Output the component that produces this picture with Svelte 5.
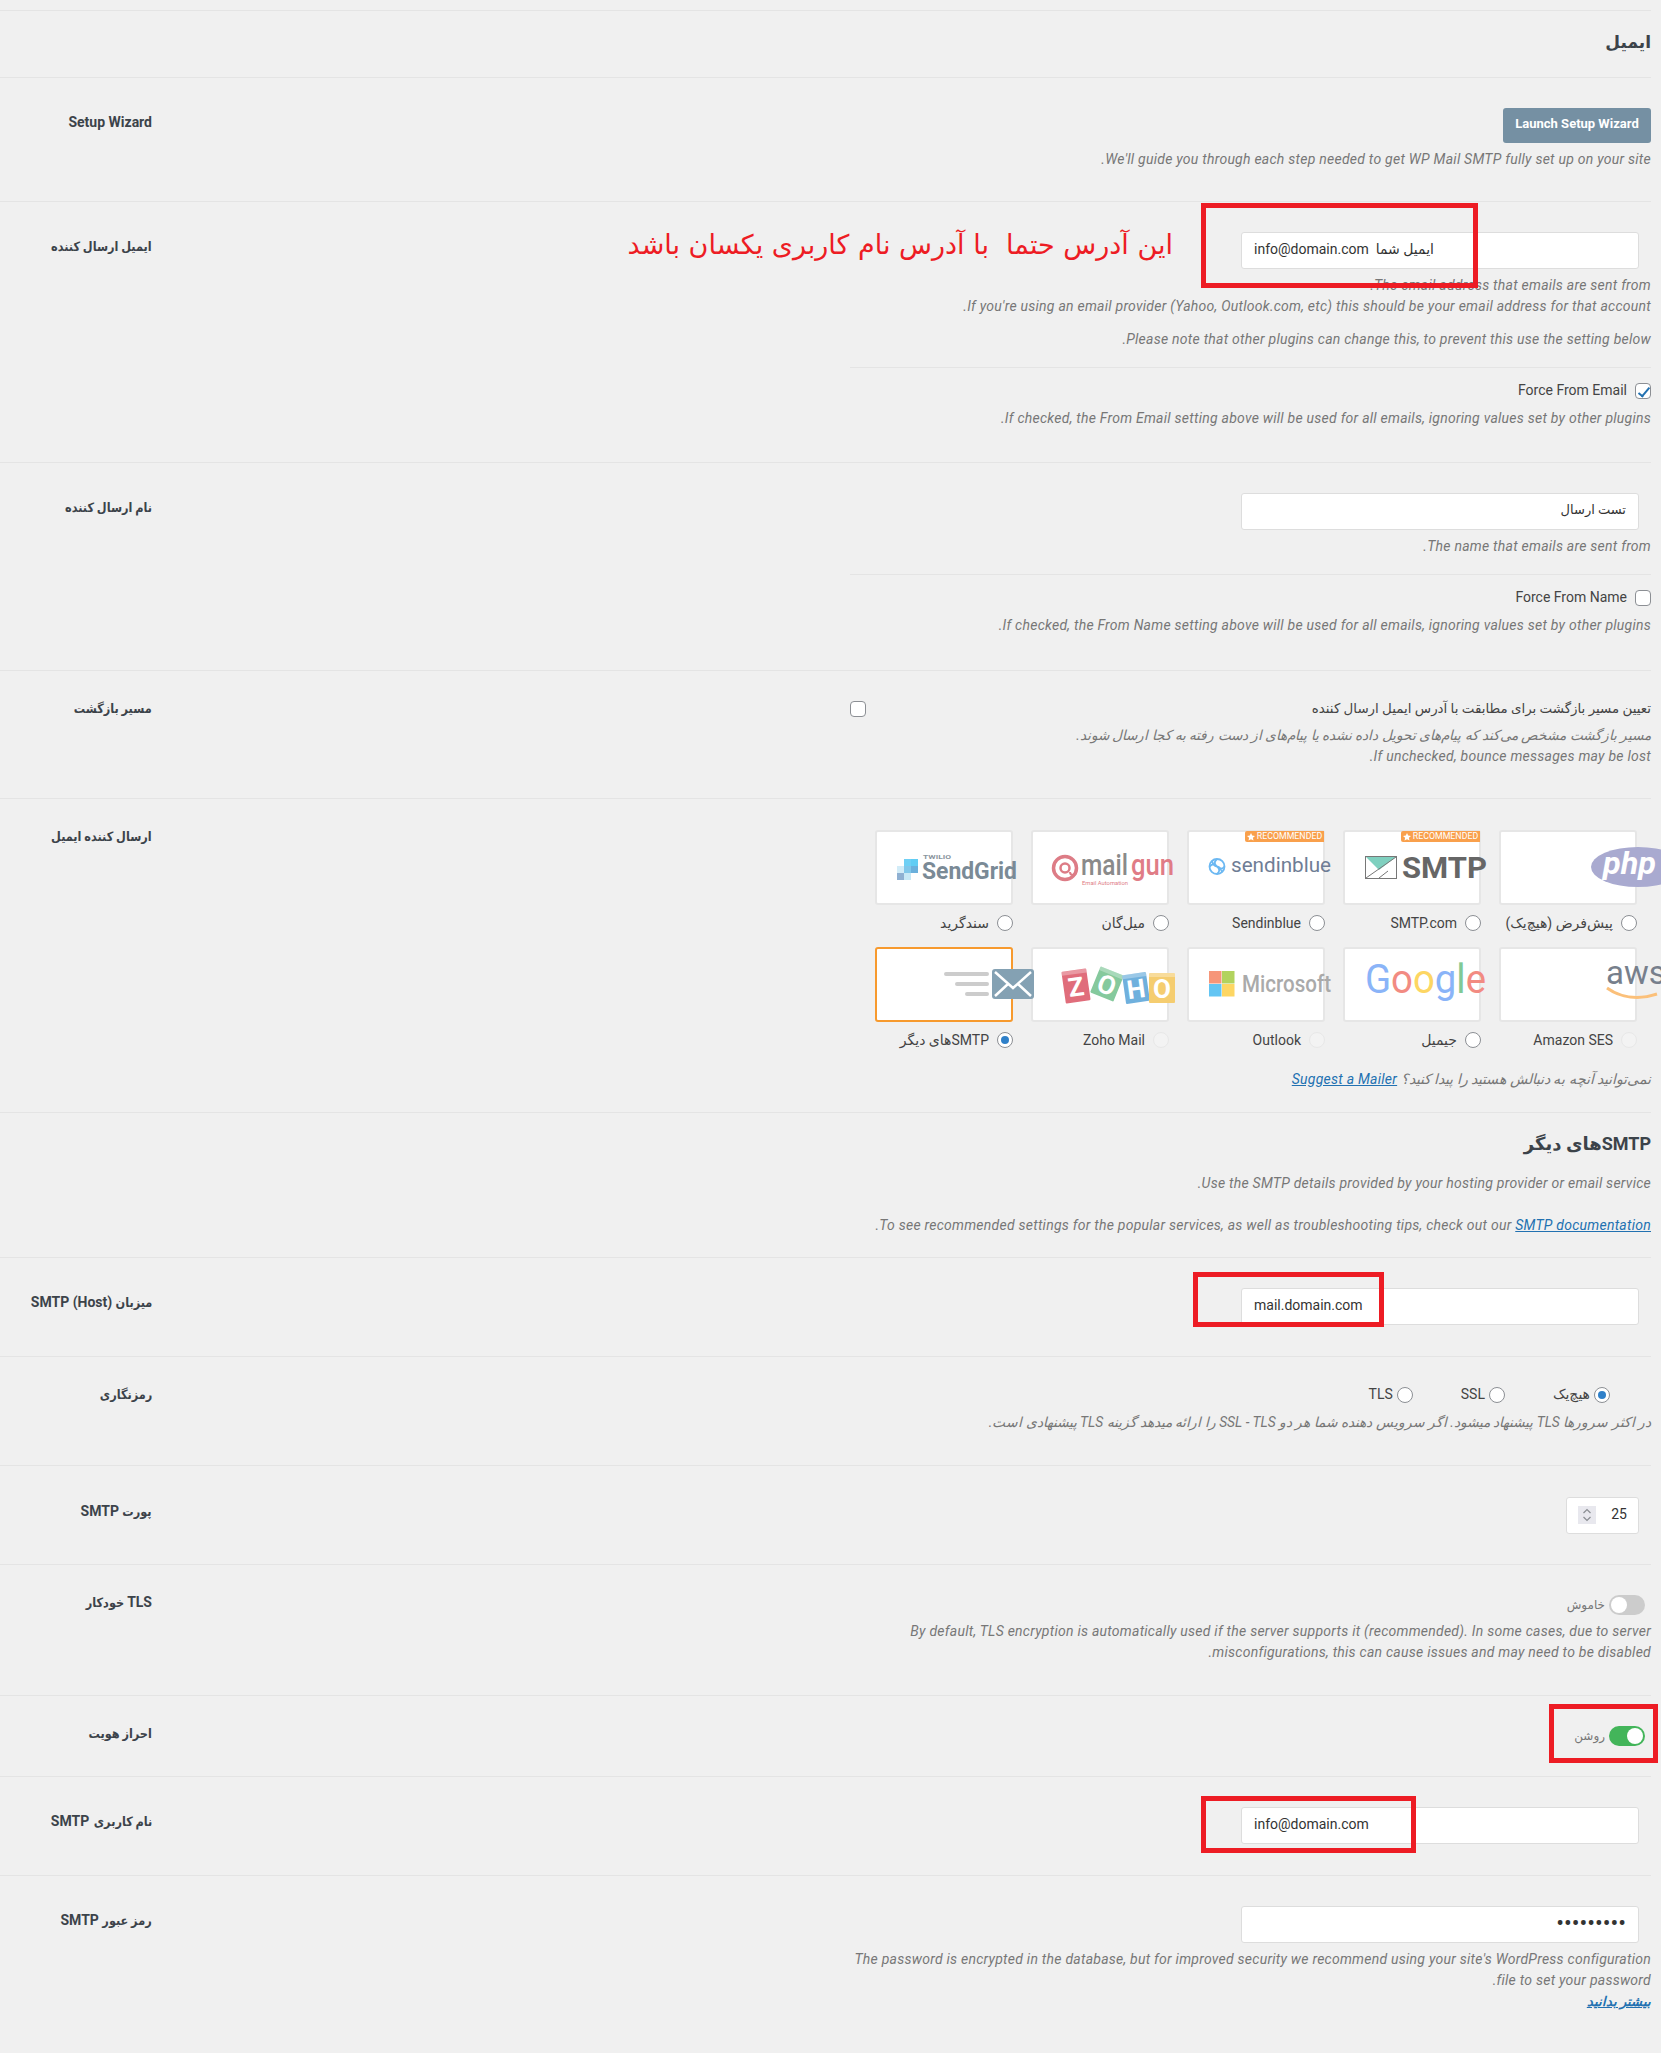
<script>
  const mailers = [
    { key: 'php', label: 'پیش‌فرض (هیچ‌یک)' },
    { key: 'smtpcom', label: 'SMTP.com', rec: true },
    { key: 'sendinblue', label: 'Sendinblue', rec: true },
    { key: 'mailgun', label: 'میل‌گان' },
    { key: 'sendgrid', label: 'سندگرید' },
    { key: 'aws', label: 'Amazon SES', off: true },
    { key: 'gmail', label: 'جیمیل' },
    { key: 'outlook', label: 'Outlook', off: true },
    { key: 'zoho', label: 'Zoho Mail', off: true },
    { key: 'other', label: 'SMTP‌های دیگر', on: true }
  ];
  const googleLetters = [
    ['G', '#8ab4f8'], ['o', '#f28b82'], ['o', '#fdd663'], ['g', '#8ab4f8'], ['l', '#81c995'], ['e', '#f28b82']
  ];
  const zohoBlocks = [
    { x: 45, y: 39, r: -8, c: '#e06d7b', w: 25, h: 32, t: 'Z' },
    { x: 76, y: 37, r: 22, c: '#85c99d', w: 25, h: 28, t: 'O' },
    { x: 105, y: 41, r: -8, c: '#6fb0dd', w: 24, h: 29, t: 'H' },
    { x: 131, y: 41, r: 0, c: '#f5cd70', w: 26, h: 30, t: 'O' }
  ];
</script>

<div class="page">
  <section class="row title">
    <h2 class="h-title">ایمیل</h2>
  </section>

  <section class="row wiz">
    <div class="label"><span dir="ltr">Setup Wizard</span></div>
    <div class="field">
      <button class="wizard" type="button">Launch Setup Wizard</button>
      <p class="help first">We'll guide you through each step needed to get WP Mail SMTP fully set up on your site.</p>
    </div>
  </section>

  <section class="row from-email">
    <div class="label"><span class="ar">ایمیل ارسال کننده</span></div>
    <div class="field">
      <input class="text" dir="ltr" type="text" value="info@domain.com  ایمیل شما" />
      <p class="help first">The email address that emails are sent from.</p>
      <p class="help">If you're using an email provider (Yahoo, Outlook.com, etc) this should be your email address for that account.</p>
      <p class="help spaced">Please note that other plugins can change this, to prevent this use the setting below.</p>
      <div class="sub">
        <label class="check"><input type="checkbox" checked /><span>Force From Email</span></label>
        <p class="help after-check">If checked, the From Email setting above will be used for all emails, ignoring values set by other plugins.</p>
      </div>
    </div>
  </section>

  <section class="row from-name">
    <div class="label"><span class="ar">نام ارسال کننده</span></div>
    <div class="field">
      <input class="text fa-input" type="text" value="تست ارسال" />
      <p class="help first">The name that emails are sent from.</p>
      <div class="sub">
        <label class="check"><input type="checkbox" /><span>Force From Name</span></label>
        <p class="help after-check">If checked, the From Name setting above will be used for all emails, ignoring values set by other plugins.</p>
      </div>
    </div>
  </section>

  <section class="row return">
    <div class="label"><span class="ar">مسیر بازگشت</span></div>
    <div class="field">
      <label class="check spread"><span class="fa-text">تعیین مسیر بازگشت برای مطابقت با آدرس ایمیل ارسال کننده</span><input type="checkbox" /></label>
      <p class="help first"><span class="fa-help">مسیر بازگشت مشخص می‌کند که پیام‌های تحویل داده نشده یا پیام‌های از دست رفته به کجا ارسال شوند.</span></p>
      <p class="help">If unchecked, bounce messages may be lost.</p>
    </div>
  </section>

  <section class="row mailer">
    <div class="label"><span class="ar">ارسال کننده ایمیل</span></div>
    <div class="field">
      <div class="grid">
        {#each mailers as m}
          <div class="item">
            <div class="card" class:selected={m.on}>
              {#if m.rec}
                <span class="badge"><svg viewBox="0 0 10 10" width="8" height="8"><path d="M5 0l1.500 3.200 3.500.4-2.600 2.300.7 3.500L5 7.700 1.900 9.400l.7-3.500L0 3.600l3.500-.4z" fill="#fff"/></svg>RECOMMENDED</span>
              {/if}
              <svg class="logo" viewBox="0 0 138 75" width="138" height="75">
                {#if m.key === 'php'}
                  <ellipse cx="139" cy="37" rx="47" ry="20" fill="#a9aad0" />
                  <text x="104" y="44" class="t-php" textLength="53" lengthAdjust="spacingAndGlyphs">php</text>
                {:else if m.key === 'smtpcom'}
                  <rect x="22.500" y="26.500" width="31" height="22" fill="#fff" stroke="#777" />
                  <path d="M23 27h30L36 40z" fill="#7fd0bf" />
                  <path d="M23 48L53 27M36 48l9-7" stroke="#777" fill="none" />
                  <text x="59" y="48" class="t-smtp" textLength="85" lengthAdjust="spacingAndGlyphs">SMTP</text>
                {:else if m.key === 'sendinblue'}
                  <g fill="none" stroke="#6cb8f2" stroke-width="1.800">
                    <circle cx="30" cy="36.500" r="7.500" />
                    <path d="M30 29c-3 3-3 5 0 7.500s3 5 0 7.500M22.500 36.500c3-3 5-3 7.500 0s5 3 7.500 0M25 31c1 4 2.500 5 5 5.500M35 42c-1-4-2.500-5-5-5.500" />
                  </g>
                  <text x="44" y="42" class="t-sib" textLength="100" lengthAdjust="spacingAndGlyphs">sendinblue</text>
                {:else if m.key === 'mailgun'}
                  <circle cx="34" cy="38" r="11.500" fill="none" stroke="#dd7c86" stroke-width="3.500" />
                  <circle cx="34" cy="38" r="4.500" fill="none" stroke="#dd7c86" stroke-width="2.500" />
                  <path d="M45 38v4a3 3 0 0 1-6 0" fill="none" stroke="#dd7c86" stroke-width="2" />
                  <text x="50" y="45" class="t-mail" textLength="47" lengthAdjust="spacingAndGlyphs">mail</text>
                  <text x="100" y="45" class="t-gun" textLength="43" lengthAdjust="spacingAndGlyphs">gun</text>
                  <text x="51" y="55" class="t-ea" textLength="46" lengthAdjust="spacingAndGlyphs">Email Automation</text>
                {:else if m.key === 'sendgrid'}
                  <rect x="36" y="29" width="7" height="7" fill="#61cdf4" />
                  <rect x="29" y="29" width="7" height="7" fill="#6fd0f5" />
                  <rect x="36" y="36" width="7" height="7" fill="#6bb0dc" />
                  <rect x="29" y="36" width="7" height="7" fill="#80c7ea" />
                  <rect x="22" y="36" width="7" height="7" fill="#d2ecf8" />
                  <rect x="22" y="43" width="7" height="7" fill="#8fb0d2" />
                  <rect x="29" y="43" width="7" height="7" fill="#c7e8f6" />
                  <text x="48" y="29" class="t-twilio" textLength="28" lengthAdjust="spacingAndGlyphs">TWILIO</text>
                  <text x="47" y="49" class="t-sg" textLength="95" lengthAdjust="spacingAndGlyphs">SendGrid</text>
                {:else if m.key === 'aws'}
                  <text x="107" y="37" class="t-aws">aws</text>
                  <path d="M108 41c14 10 32 12 50 6" fill="none" stroke="#fbc07a" stroke-width="3" />
                {:else if m.key === 'gmail'}
                  <text x="22" y="46" class="t-google" textLength="121" lengthAdjust="spacingAndGlyphs">{#each googleLetters as l}<tspan fill={l[1]}>{l[0]}</tspan>{/each}</text>
                {:else if m.key === 'outlook'}
                  <rect x="22" y="24" width="12.500" height="12.500" fill="#f69679" />
                  <rect x="35" y="24" width="12.500" height="12.500" fill="#b2d35e" />
                  <rect x="22" y="37" width="12.500" height="12.500" fill="#63c5f3" />
                  <rect x="35" y="37" width="12.500" height="12.500" fill="#fdd663" />
                  <text x="55" y="45" class="t-ms" textLength="89" lengthAdjust="spacingAndGlyphs">Microsoft</text>
                {:else if m.key === 'zoho'}
                  {#each zohoBlocks as b}
                    <g transform="translate({b.x} {b.y}) rotate({b.r})">
                      <rect x={-b.w / 2} y={-b.h / 2} width={b.w} height={b.h} rx="1" fill={b.c} />
                      <rect x={-b.w / 2} y={-b.h / 2} width={b.w} height="4" fill="#fff" opacity=".3" />
                      <text x="0" y="10" class="t-zoho">{b.t}</text>
                    </g>
                  {/each}
                {:else}
                  <path d="M71 27h41M82 37h30M92 47h20" stroke="#ccc" stroke-width="4" stroke-linecap="round" fill="none" />
                  <rect x="117" y="22" width="42" height="30" rx="3" fill="#84a1b3" />
                  <path d="M120 25l18 16 18-16M120 49l13-12M156 49l-13-12" stroke="#fff" stroke-width="2.500" fill="none" />
                {/if}
              </svg>
            </div>
            <label class="choice">
              <input type="radio" name="mailer" checked={m.on} disabled={m.off} />
              <span>{m.label}</span>
            </label>
          </div>
        {/each}
      </div>
      <p class="help suggest"><span class="fa-help">نمی‌توانید آنچه به دنبالش هستید را پیدا کنید؟</span> <a href="#s">Suggest a Mailer</a></p>
    </div>
  </section>

  <section class="row smtp-head">
    <h2>SMTP‌های دیگر</h2>
    <p class="help p1">Use the SMTP details provided by your hosting provider or email service.</p>
    <p class="help p2">To see recommended settings for the popular services, as well as troubleshooting tips, check out our <a href="#d">SMTP documentation</a>.</p>
  </section>

  <section class="row input-row">
    <div class="label"><span class="ar host">میزبان</span> SMTP (Host)</div>
    <div class="field"><input class="text" dir="ltr" type="text" value="mail.domain.com" /></div>
  </section>

  <section class="row enc">
    <div class="label"><span class="ar">رمزنگاری</span></div>
    <div class="field">
      <div class="choices">
        <label class="choice"><input type="radio" name="enc" checked /><span>هیچ‌یک</span></label>
        <label class="choice"><input type="radio" name="enc" /><span>SSL</span></label>
        <label class="choice"><input type="radio" name="enc" /><span>TLS</span></label>
      </div>
      <p class="help enc-help"><span class="fa-help">در اکثر سرورها TLS پیشنهاد میشود. اگر سرویس دهنده شما هر دو SSL - TLS را ارائه میدهد گزینه TLS پیشنهادی است.</span></p>
    </div>
  </section>

  <section class="row port">
    <div class="label"><span class="ar portw">پورت</span> SMTP</div>
    <div class="field">
      <div class="number-wrap">
        <input class="number" type="text" value="25" />
        <span class="spinner">
          <svg viewBox="0 0 18 18" width="18" height="18"><path d="M5.500 7L9 3.500 12.500 7M5.500 11L9 14.500 12.500 11" fill="none" stroke="#8a8d92" stroke-width="1.200"/></svg>
        </span>
      </div>
    </div>
  </section>

  <section class="row tog">
    <div class="label"><span dir="ltr">TLS</span> <span class="ar">خودکار</span></div>
    <div class="field">
      <div class="toggle"><span class="switch"></span><span class="state">خاموش</span></div>
      <p class="help first">By default, TLS encryption is automatically used if the server supports it (recommended). In some cases, due to server misconfigurations, this can cause issues and may need to be disabled.</p>
    </div>
  </section>

  <section class="row tog auth">
    <div class="label"><span class="ar">احراز هویت</span></div>
    <div class="field">
      <div class="toggle"><span class="switch on"></span><span class="state">روشن</span></div>
    </div>
  </section>

  <section class="row input-row">
    <div class="label"><span class="ar userw">نام کاربری</span> SMTP</div>
    <div class="field"><input class="text" dir="ltr" type="text" value="info@domain.com" /></div>
  </section>

  <section class="row pass">
    <div class="label"><span class="ar passw">رمز عبور</span> SMTP</div>
    <div class="field">
      <input class="text pw" type="password" value="123456789" />
      <p class="help first">The password is encrypted in the database, but for improved security we recommend using your site's WordPress configuration file to set your password.</p>
      <a class="more" href="#m">بیشتر بدانید</a>
    </div>
  </section>

  <div class="mark m1"></div>
  <div class="mark m2"></div>
  <div class="mark m3"></div>
  <div class="mark m4"></div>
  <div class="note">این آدرس حتما  با آدرس نام کاربری یکسان باشد</div>
</div>

<style>
  :global(body) {
    margin: 0;
    background: #f0f0f0;
  }
  .page {
    position: relative;
    box-sizing: border-box;
    width: 1661px;
    height: 2053px;
    overflow: hidden;
    padding: 10px 10px 0 0;
    direction: rtl;
    font: 14px/21px Roboto, "DejaVu Sans", sans-serif;
    color: #444;
  }
  .row {
    display: flex;
    justify-content: space-between;
    align-items: flex-start;
    border-top: 1px solid #e4e4e4;
    padding: 30px 0 32px;
  }
  .row.title {
    padding: 19px 0 22px;
    height: 25px;
    box-sizing: content-box;
  }
  .row.wiz { padding-bottom: 31px; }
  .row.from-email { padding-bottom: 33px; }
  .row.from-name { padding-bottom: 34px; }
  h2 {
    margin: 0;
    font-size: 18px;
    line-height: 24px;
    font-weight: 700;
    color: #3c434a;
  }
  h2.h-title {
    font-size: 17px;
  }
  .label {
    order: 2;
    width: 152px;
    margin: 4px 0 0;
    flex: none;
    font-size: 14px;
    font-weight: 700;
    color: #3c434a;
    text-align: right;
    white-space: nowrap;
  }
  .ar {
    display: inline-block;
    font-size: 13px;
    transform: scaleX(0.87);
    transform-origin: right center;
  }
  .ar.host { margin-left: -6px; }
  .ar.portw { margin-left: -4px; }
  .ar.userw { margin-left: -8px; }
  .ar.passw { margin-left: -7px; }
  .field {
    width: 801px;
    flex: none;
  }
  .wizard {
    display: block;
    width: 148px;
    height: 35px;
    border: 0;
    border-radius: 3px;
    background: #7590a3;
    color: #fff;
    font: 700 13px Roboto, sans-serif;
    padding: 0 0 4px;
  }
  .help {
    margin: 0;
    font-style: italic;
    color: #777;
    letter-spacing: 0.25px;
  }
  .help a,
  .more {
    color: #2271b1;
  }
  .help.first {
    margin-top: 6px;
  }
  .help.spaced {
    margin-top: 12px;
  }
  .help.after-check {
    margin-top: 7px;
  }
  .fa-help {
    font-size: 13.700px;
    letter-spacing: 0;
  }
  .suggest .fa-help {
    font-size: 14.200px;
  }
  .enc-help .fa-help {
    font-size: 13.800px;
  }
  .text {
    display: block;
    box-sizing: border-box;
    width: 398px;
    height: 37px;
    margin: 0 12px 0 0;
    padding: 0 12px 4px;
    border: 1px solid #ddd;
    border-radius: 3px;
    background: #fff;
    font: 14px Roboto, "DejaVu Sans", sans-serif;
    color: #333;
  }
  .fa-input {
    font-size: 13px;
  }
  .text.pw {
    font-size: 23px;
    padding-bottom: 2px;
  }
  .sub {
    margin-top: 17px;
    padding-top: 12px;
    border-top: 1px solid #e4e4e4;
  }
  .check {
    display: flex;
    align-items: center;
    gap: 8px;
  }
  .check.spread {
    justify-content: space-between;
  }
  .fa-text {
    font-size: 13.400px;
  }
  input[type='checkbox'],
  input[type='radio'] {
    appearance: none;
    flex: none;
    box-sizing: border-box;
    width: 16px;
    height: 16px;
    margin: 0;
    border: 1px solid #8c8f94;
    background: #fff;
    position: relative;
  }
  input[type='checkbox'] {
    border-radius: 4px;
  }
  input[type='radio'] {
    border-radius: 50%;
  }
  input[type='checkbox']:checked::after {
    content: '';
    position: absolute;
    left: 4.500px;
    top: 1px;
    width: 4px;
    height: 10px;
    border: solid #2271b1;
    border-width: 0 2px 2px 0;
    transform: rotate(40deg);
  }
  input[type='radio']:checked::after {
    content: '';
    position: absolute;
    inset: 3px;
    border-radius: 50%;
    background: #2f80c9;
  }
  input[type='radio']:disabled {
    background: #f3f3f3;
    border-color: #e8e8e8;
  }
  .grid {
    display: grid;
    grid-template-columns: repeat(5, 138px);
    column-gap: 18px;
    row-gap: 16px;
    margin-right: 14px;
    width: 762px;
  }
  .card {
    position: relative;
    box-sizing: border-box;
    width: 138px;
    height: 75px;
    background: #fff;
    border: 2px solid #e6e6e6;
    border-radius: 3px;
  }
  .card.selected {
    border-color: #f79a2e;
  }
  .logo {
    position: absolute;
    left: -2px;
    top: -2px;
    overflow: visible;
    direction: ltr;
    font-family: Roboto, sans-serif;
  }
  .badge {
    position: absolute;
    top: -1px;
    right: -1px;
    z-index: 1;
    display: flex;
    align-items: center;
    justify-content: center;
    gap: 2px;
    direction: ltr;
    width: 79px;
    height: 11px;
    border-radius: 2px 0 0 2px;
    background: #f9a04c;
    color: #fff;
    font-size: 8.800px;
    line-height: 11px;
  }
  .t-php { fill: #fff; font-size: 32px; font-weight: 700; font-style: italic; }
  .t-smtp { fill: #666; font-size: 30px; font-weight: 700; }
  .t-sib { fill: #6f7d95; font-size: 21px; }
  .t-mail { fill: #8a8a8a; font-size: 29px; font-weight: 500; }
  .t-gun { fill: #e07c86; font-size: 29px; font-weight: 500; }
  .t-ea { fill: #e07c86; font-size: 6px; }
  .t-twilio { fill: #8a959e; font-size: 6px; font-weight: 700; }
  .t-sg { fill: #7a8a96; font-size: 24px; font-weight: 700; }
  .t-aws { fill: #777f8c; font-size: 33px; }
  .t-google { font-size: 40px; }
  .t-ms { fill: #aaa; font-size: 24px; font-weight: 500; }
  .t-zoho { fill: #fff; font-size: 26px; font-weight: 700; text-anchor: middle; }
  .choice {
    display: flex;
    align-items: center;
    gap: 8px;
    height: 16px;
    color: #444;
  }
  .item .choice {
    margin-top: 10px;
  }
  .suggest {
    margin-top: 21px;
  }
  .row.mailer {
    padding: 31px 0 22px;
  }
  .row.mailer .label {
    margin-top: -4px;
  }
  .row.tog .label {
    margin-top: -3px;
  }
  .row.return {
    padding: 27px 0 31px;
  }
  .row.return .label {
    margin-top: 0;
  }
  .row.smtp-head {
    display: block;
    padding: 19px 0 21px;
  }
  .p1 {
    margin-top: 17px;
  }
  .p2 {
    margin-top: 21px;
  }
  .row.input-row {
    padding-bottom: 31px;
  }
  .row.enc {
    padding: 27px 0 32px;
  }
  .row.enc .label {
    margin-top: 0;
  }
  .choices {
    display: flex;
    gap: 48px;
    height: 21px;
    align-items: center;
    padding-right: 41px;
  }
  .choices .choice {
    gap: 4px;
  }
  .enc-help {
    margin-top: 7px;
  }
  .row.port {
    padding: 31px 0 30px;
  }
  .number-wrap {
    position: relative;
    width: 73px;
    margin-right: 12px;
  }
  .number {
    display: block;
    box-sizing: border-box;
    width: 73px;
    height: 37px;
    margin: 0;
    padding: 0 11px 4px;
    border: 1px solid #ddd;
    border-radius: 3px;
    background: #fff;
    font: 14px Roboto, sans-serif;
    color: #333;
  }
  .spinner {
    position: absolute;
    left: 12px;
    top: 9px;
    width: 18px;
    height: 18px;
    background: #e8e8ee;
  }
  .spinner svg {
    display: block;
  }
  .toggle {
    display: flex;
    align-items: center;
    gap: 4px;
    height: 20px;
    padding-right: 6px;
  }
  .switch {
    position: relative;
    width: 36px;
    height: 20px;
    border-radius: 10px;
    background: #ccc;
  }
  .switch::after {
    content: '';
    position: absolute;
    top: 2px;
    left: 2px;
    width: 16px;
    height: 16px;
    border-radius: 50%;
    background: #fff;
  }
  .switch.on {
    background: #43b55a;
  }
  .switch.on::after {
    left: auto;
    right: 2px;
  }
  .state {
    font-size: 12px;
    color: #777;
  }
  .row.auth {
    padding-bottom: 30px;
  }
  .row.pass {
    padding-bottom: 33px;
  }
  .more {
    display: block;
    font-style: italic;
    font-weight: 700;
    font-size: 13px;
  }
  .mark {
    position: absolute;
    box-sizing: border-box;
    border: 5px solid #ed1c24;
  }
  .m1 { left: 1201px; top: 203px; width: 277px; height: 85px; }
  .m2 { left: 1193px; top: 1272px; width: 191px; height: 55px; }
  .m3 { left: 1549px; top: 1704px; width: 109px; height: 59px; }
  .m4 { left: 1201px; top: 1796px; width: 215px; height: 57px; }
  .note {
    position: absolute;
    right: 488px;
    top: 228px;
    white-space: pre;
    color: #ed1c24;
    font: 27px/34px "DejaVu Sans", sans-serif;
  }
</style>
